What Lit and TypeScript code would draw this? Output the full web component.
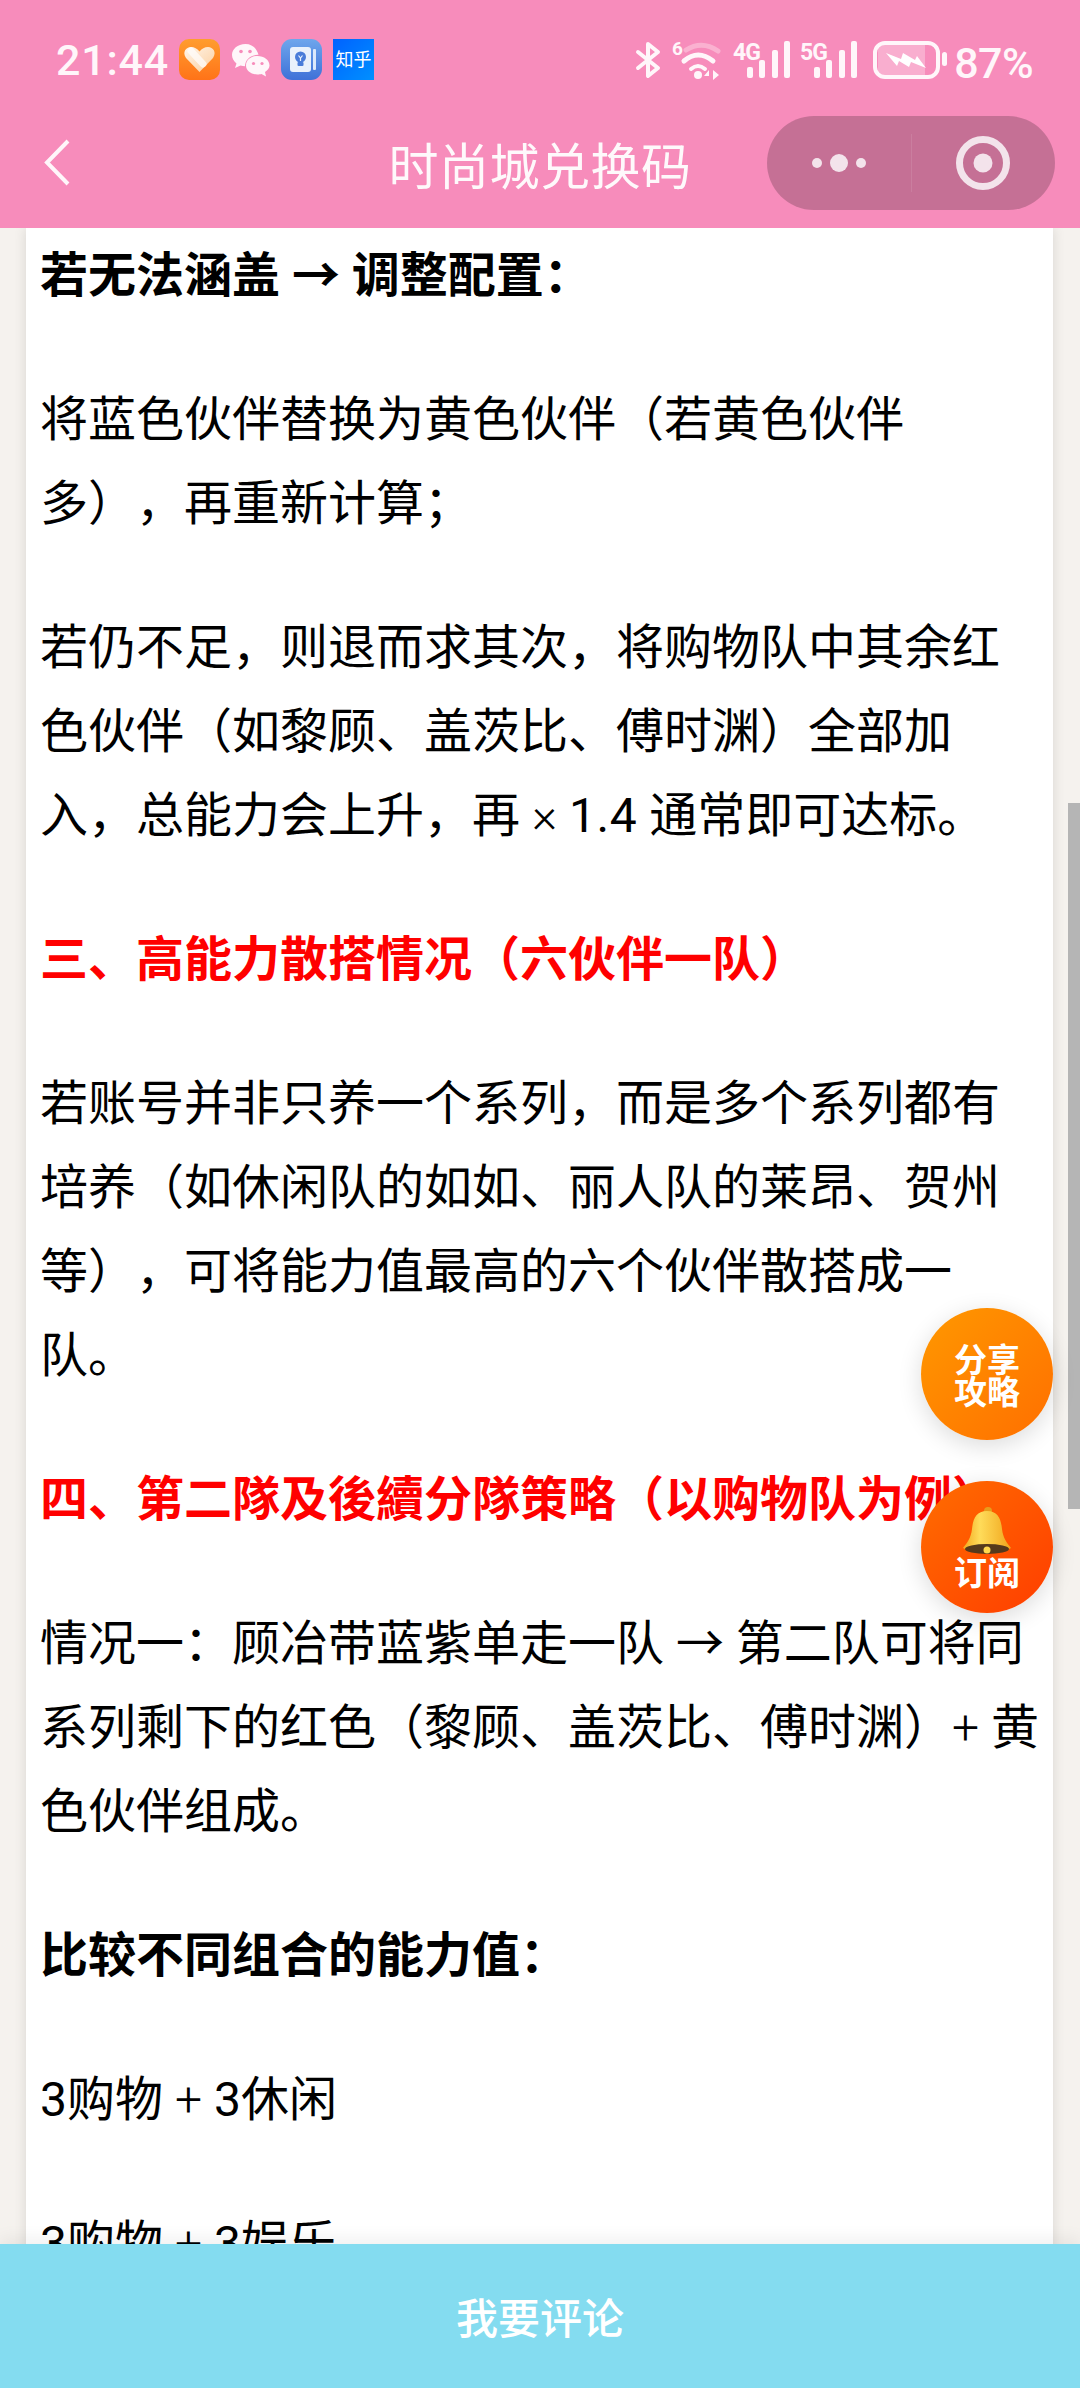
import { css, html, LitElement } from 'lit';
import { customElement } from 'lit/decorators.js';

const blocks = [
  { cls: 'strong', text: html`若无法涵盖 → 调整配置：` },
  { cls: '', text: html`将蓝色伙伴替换为黄色伙伴（若黄色伙伴多），再重新计算；` },
  { cls: '', text: html`若仍不足，则退而求其次，将购物队中其余红色伙伴（如黎顾、盖茨比、傅时渊）全部加入，总能力会上升，再 <span class="lat">×</span> <span class="num">1.4</span> 通常即可达标。` },
  { cls: 'red', text: html`三、高能力散搭情况（六伙伴一队）` },
  { cls: '', text: html`若账号并非只养一个系列，而是多个系列都有培养（如休闲队的如如、丽人队的莱昂、贺州等），可将能力值最高的六个伙伴散搭成一队。` },
  { cls: 'red', text: html`四、第二隊及後續分隊策略（以购物队为例）` },
  { cls: '', text: html`情况一：顾冶带蓝紫单走一队 → 第二队可将同系列剩下的红色（黎顾、盖茨比、傅时渊）<span class="lat">+</span> 黄色伙伴组成。` },
  { cls: 'strong', text: html`比较不同组合的能力值：` },
  { cls: '', text: html`3购物 <span class="lat">+</span> 3休闲` },
  { cls: '', text: html`3购物 <span class="lat">+</span> 3娱乐` },
];

const signal = (label: string) => html`
  <svg class="signal" viewBox="0 0 57 38" fill="#fff6fa">
    <text x="0" y="19" class="net">${label}</text>
    <rect x="14" y="26" width="6" height="11" rx="2"></rect>
    <rect x="26" y="19" width="6" height="18" rx="2"></rect>
    <rect x="39" y="9" width="6" height="28" rx="2"></rect>
    <rect x="51" y="0" width="6" height="37" rx="2"></rect>
  </svg>`;

@customElement('app-root')
export class AppRoot extends LitElement {
  static styles = [css`
    :host {
      display: block;
      font-family: Roboto, "Noto Sans CJK SC", sans-serif;
    }

    .page {
      position: relative;
      display: flex;
      flex-direction: column;
      height: 2388px;
      overflow: hidden;
      background: #f5f2ee;
    }

    .header {
      flex: none;
      height: 228px;
      background: #f78cbb;
      color: #fff6fa;
      position: relative;
      z-index: 2;
    }

    .status {
      height: 116px;
      display: flex;
      justify-content: space-between;
      align-items: flex-start;
      padding: 39px 47px 0 56px;
      box-sizing: border-box;
    }

    .left, .right {
      display: flex;
      align-items: flex-start;
    }

    .left { gap: 11px; }
    .right { gap: 10px; margin-top: 2px; }

    .time {
      width: 112px;
      font-size: 43px;
      line-height: 42px;
      font-weight: 500;
      letter-spacing: 0.8px;
      white-space: nowrap;
    }

    .app {
      width: 41px;
      height: 41px;
      display: block;
    }

    .wechat {
      width: 39px;
      height: 34px;
      margin-top: 4px;
    }

    .zhihu {
      width: 41px;
      height: 41px;
      background: linear-gradient(135deg, #0062ff, #0090ff);
      color: #fff;
      font-size: 18px;
      line-height: 41px;
      text-align: center;
      white-space: nowrap;
      overflow: hidden;
    }

    .bt { width: 26px; height: 38px; }
    .wifi { width: 52px; height: 40px; }
    .signal { width: 57px; height: 38px; overflow: visible; }
    .battery { width: 74px; height: 38px; margin-left: 6px; }

    .net {
      font-size: 23px;
      font-weight: 700;
      letter-spacing: -1px;
    }

    .six {
      font-size: 19px;
      font-weight: 700;
    }

    .pct {
      font-size: 43px;
      line-height: 42px;
      font-weight: 500;
      margin: 1px 0 0 -3px;
      letter-spacing: -0.6px;
    }

    .nav {
      display: grid;
      grid-template-columns: 1fr auto 1fr;
      height: 94px;
      align-items: center;
    }

    .back {
      width: 28px;
      height: 50px;
      margin-left: 44px;
    }

    .title {
      font-family: "Noto Sans CJK SC", sans-serif;
      font-size: 50px;
      line-height: 94px;
      letter-spacing: 0.5px;
      color: #fff;
      opacity: 0.95;
    }

    .capsule {
      justify-self: end;
      margin-right: 25px;
      width: 288px;
      height: 94px;
      border-radius: 47px;
      background: rgba(0, 0, 0, 0.2);
      display: grid;
      grid-template-columns: 144px 1px 1fr;
      align-items: center;
      justify-items: center;
    }

    .dots {
      display: flex;
      align-items: center;
      gap: 8px;
    }

    .dots i {
      width: 10px;
      height: 10px;
      border-radius: 50%;
      background: #f3e3eb;
    }

    .dots i.big {
      width: 18px;
      height: 18px;
    }

    .sep {
      width: 1px;
      height: 58px;
      background: rgba(255, 255, 255, 0.1);
    }

    .target {
      width: 54px;
      height: 54px;
      margin-right: 2px;
    }

    .main {
      flex: 1;
      min-height: 0;
      overflow: hidden;
      padding: 0 27px 0 26px;
    }

    .card {
      background: #fff;
      box-shadow: 0 0 12px rgba(0, 0, 0, 0.12);
      padding: 6px 13px 0 14px;
      min-height: 100%;
      font-family: Roboto, "Noto Sans CJK SC", sans-serif;
      font-size: 48px;
      line-height: 84px;
      color: #000;
      text-spacing-trim: space-all;
    }

    .card p {
      margin: 0 0 60px;
    }

    .lat { font-weight: 300; }
    .num { letter-spacing: 0.6px; }
    .strong { font-weight: 700; }
    .red { font-weight: 700; color: #f00; }

    .footer {
      flex: none;
      height: 144px;
      background: #84dcf0;
      color: #fff;
      font-family: "Noto Sans CJK SC", sans-serif;
      font-size: 42px;
      font-weight: 500;
      line-height: 144px;
      text-align: center;
      box-shadow: 0 -6px 16px rgba(0, 0, 0, 0.06);
      position: relative;
      z-index: 2;
    }

    .scrollbar {
      position: absolute;
      right: 0;
      top: 803px;
      width: 12px;
      height: 706px;
      background: #b5b5b5;
    }

    .fab {
      position: absolute;
      left: 921px;
      width: 132px;
      height: 132px;
      border-radius: 50%;
      display: flex;
      flex-direction: column;
      align-items: center;
      justify-content: center;
      color: #fff;
      font-family: "Noto Sans CJK SC", sans-serif;
      font-size: 33px;
      line-height: 32px;
      font-weight: 700;
      text-align: center;
      box-shadow: 0 6px 24px rgba(0, 0, 0, 0.14);
      z-index: 1;
    }

    .share {
      top: 1308px;
      background: linear-gradient(135deg, #ff9800, #ff6f00);
    }

    .sub {
      top: 1481px;
      background: linear-gradient(135deg, #ff6d00, #ff3d00);
    }

    .bell {
      width: 50px;
      height: 49px;
      display: block;
      margin-bottom: -1px;
    }
  `];

  private statusLeft() {
    return html`
      <div class="left">
        <span class="time">21:44</span>
        <svg class="app" viewBox="0 0 41 41">
          <defs>
            <linearGradient id="hg" x1="0" y1="0" x2="0" y2="1">
              <stop offset="0" stop-color="#ff9d2e"></stop>
              <stop offset="1" stop-color="#ff7318"></stop>
            </linearGradient>
            <linearGradient id="hw" x1="0" y1="0" x2="1" y2="1">
              <stop offset="0" stop-color="#fff5ea"></stop>
              <stop offset="1" stop-color="#fbcf9f"></stop>
            </linearGradient>
          </defs>
          <rect width="41" height="41" rx="10" fill="url(#hg)"></rect>
          <path d="M20.5 33 L7 19 C3 13 7 8 12 8 C15.5 8 18 9.5 20.5 12.5 C23 9.5 25.5 8 29 8 C34 8 38 13 34 19 Z" fill="url(#hw)"></path>
          <path d="M12 12 L24 25" stroke="#fff" stroke-width="7" stroke-linecap="round" opacity="0.7"></path>
        </svg>
        <svg class="wechat" viewBox="0 0 39 34">
          <path d="M14.5 1 C6.5 1 1 6 1 12 C1 15.5 3 18.5 5.5 20.5 L4 25 L9.5 22.5 C11 23 12.5 23.2 14 23.2 C14 16.5 20 11.5 27.5 11.8 C26 5.5 21 1 14.5 1 Z" fill="#fff6fa"></path>
          <path d="M26.5 13 C20 13 15 17 15 22.5 C15 27.5 20 31.5 26.5 31.5 C28 31.5 29.5 31.2 30.5 31 L35 33.5 L34 29 C36.8 27.2 38.5 25 38.5 22.5 C38.5 17 33 13 26.5 13 Z" fill="#fff6fa"></path>
          <circle cx="10" cy="8.5" r="1.8" fill="#f78cbb"></circle>
          <circle cx="19" cy="8.5" r="1.8" fill="#f78cbb"></circle>
          <circle cx="22.5" cy="20.5" r="1.6" fill="#f78cbb"></circle>
          <circle cx="31" cy="20.5" r="1.6" fill="#f78cbb"></circle>
        </svg>
        <svg class="app" viewBox="0 0 41 41">
          <defs>
            <linearGradient id="bg" x1="0" y1="0" x2="0" y2="1">
              <stop offset="0" stop-color="#6ea6ec"></stop>
              <stop offset="1" stop-color="#3f71d8"></stop>
            </linearGradient>
          </defs>
          <rect width="41" height="41" rx="11" fill="url(#bg)"></rect>
          <rect x="32" y="10" width="3" height="21" rx="1" fill="#dce9fb"></rect>
          <rect x="9" y="8" width="21" height="25" rx="3" fill="#e9f1fc"></rect>
          <circle cx="19.5" cy="18" r="5.5" fill="#4a7cd9"></circle>
          <rect x="16.5" y="23" width="6" height="4" rx="1" fill="#4a7cd9"></rect>
          <path d="M17.5 16.5 L19.5 19 L21.5 16.5 M19.5 19 V22" stroke="#e9f1fc" stroke-width="1.2" fill="none"></path>
        </svg>
        <span class="zhihu">知乎</span>
      </div>`;
  }

  private statusRight() {
    return html`
      <div class="right">
        <svg class="bt" viewBox="0 0 26 38" fill="none" stroke="#fff6fa" stroke-width="4" stroke-linejoin="round" stroke-linecap="round">
          <path d="M3 11 L23 27 L13 35 V3 L23 11 L3 27"></path>
        </svg>
        <svg class="wifi" viewBox="0 0 52 40" fill="none" stroke="#fff6fa" stroke-linecap="round">
          <text x="1" y="14" class="six" fill="#fff6fa" stroke="none">6</text>
          <path d="M15 9 Q31 -1 47 10" stroke-width="5" opacity="0.35"></path>
          <path d="M13 20 Q27 8 42 20" stroke-width="5"></path>
          <path d="M20 28 Q27 22 34 28" stroke-width="4"></path>
          <circle cx="27" cy="34" r="4" fill="#fff6fa" stroke="none"></circle>
          <path d="M38 39 V29 L33 35 H38 Z M42 29 V39 L48 34 Z" fill="#fff6fa" stroke="none"></path>
        </svg>
        ${signal('4G')}
        ${signal('5G')}
        <svg class="battery" viewBox="0 0 74 38">
          <rect x="2" y="2" width="63" height="34" rx="10" fill="none" stroke="#fff6fa" stroke-width="4"></rect>
          <path d="M5 4 H52 V34 H5 Z" fill="#fff" opacity="0.3"></path>
          <path d="M13 12 L28 18 L30 12 L42 19 L44 15 L53 27 L38 21 L36 26 L26 20 L24 25 Z" fill="#fff"></path>
          <rect x="69" y="11" width="5" height="14" rx="2.5" fill="#fff6fa"></rect>
        </svg>
        <span class="pct">87%</span>
      </div>`;
  }

  public render() {
    return html`
      <div class="page">
        <div class="header">
          <div class="status">${this.statusLeft()}${this.statusRight()}</div>
          <div class="nav">
            <svg class="back" viewBox="0 0 28 50" fill="none" stroke="#fff6fa" stroke-width="4">
              <path d="M24 3 L3 24.5 L24 46"></path>
            </svg>
            <div class="title">时尚城兑换码</div>
            <div class="capsule">
              <div class="dots"><i></i><i class="big"></i><i></i></div>
              <div class="sep"></div>
              <svg class="target" viewBox="0 0 54 54">
                <circle cx="27" cy="27" r="23.5" fill="none" stroke="#f3e3eb" stroke-width="7"></circle>
                <circle cx="27" cy="27" r="9.5" fill="#f3e3eb"></circle>
              </svg>
            </div>
          </div>
        </div>
        <div class="main">
          <div class="card">
            ${blocks.map((b) => html`<p class=${b.cls}>${b.text}</p>`)}
          </div>
        </div>
        <div class="footer">我要评论</div>
        <div class="scrollbar"></div>
        <div class="fab share"><span>分享</span><span>攻略</span></div>
        <div class="fab sub">
          <svg class="bell" viewBox="0 0 50 49">
            <defs>
              <linearGradient id="bl" x1="0" y1="0" x2="1" y2="0">
                <stop offset="0" stop-color="#f2a81e"></stop>
                <stop offset="0.35" stop-color="#ffdc5a"></stop>
                <stop offset="1" stop-color="#f0a51c"></stop>
              </linearGradient>
            </defs>
            <circle cx="26" cy="4" r="4" fill="#e89c1c"></circle>
            <path d="M25 4 C14 4 11 12 10 22 C9 31 5 36 1 41 C10 47 40 47 49 41 C45 36 41 31 40 22 C39 12 36 4 25 4 Z" fill="url(#bl)"></path>
            <ellipse cx="25" cy="42" rx="22" ry="5" fill="#55391c"></ellipse>
            <circle cx="25" cy="43" r="3.5" fill="#ffd84d"></circle>
          </svg>
          <span>订阅</span>
        </div>
      </div>
    `;
  }
}
